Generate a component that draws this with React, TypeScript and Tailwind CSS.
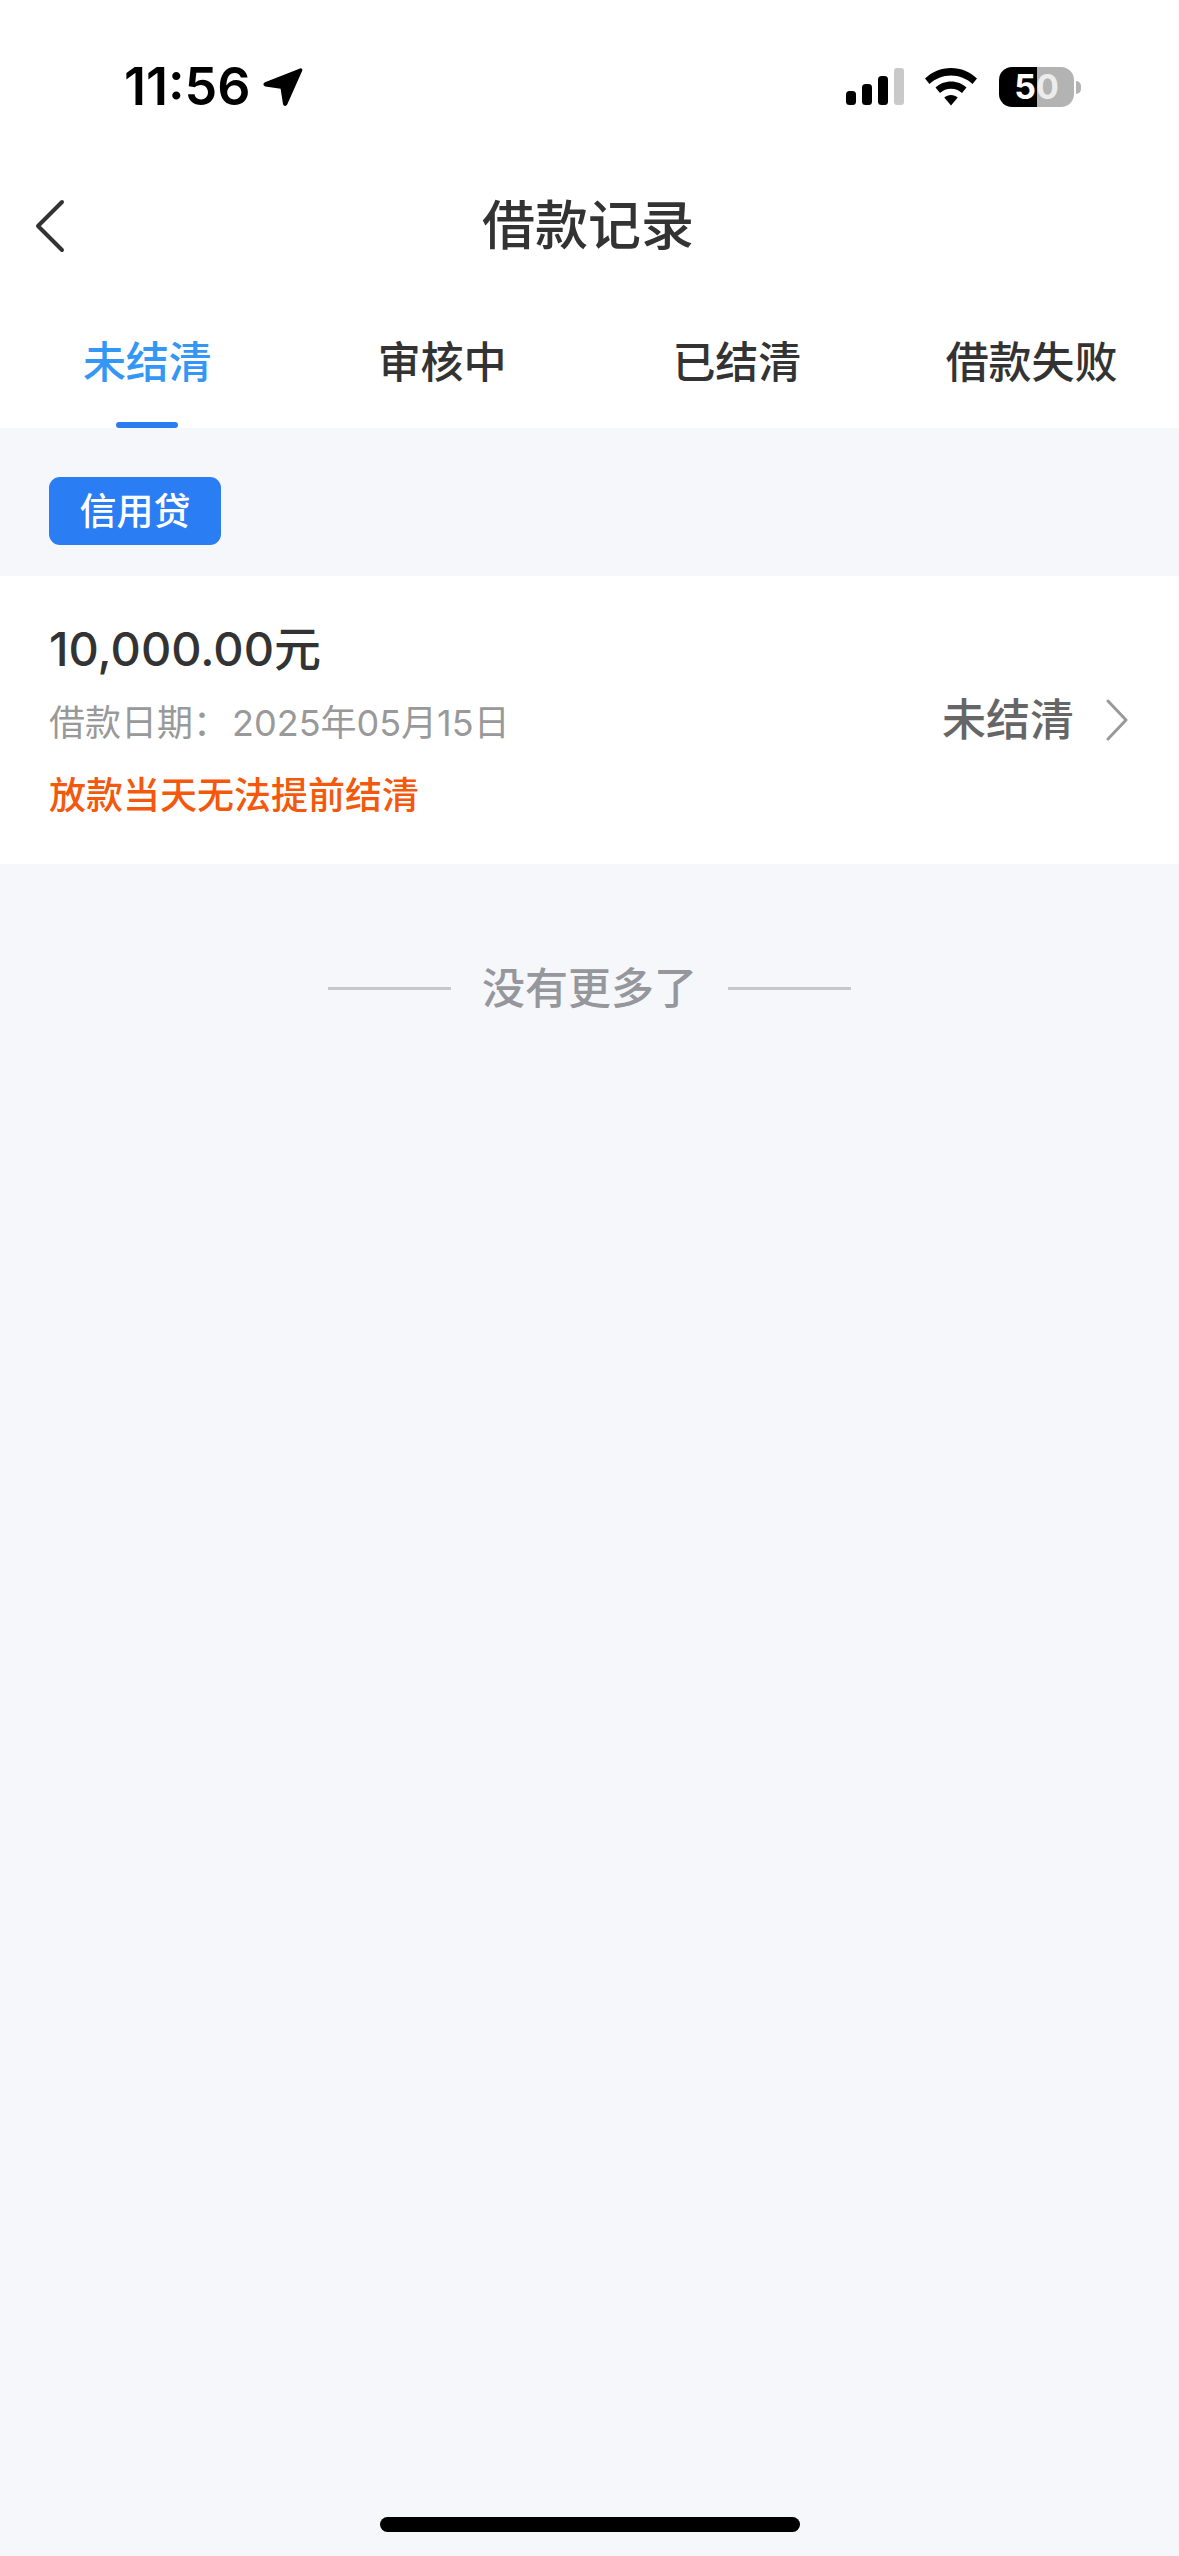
const FONT = "font-['Inter','Noto_Sans_CJK_SC',sans-serif]";

const TABS = [
  { label: '未结清', active: true },
  { label: '审核中', active: false },
  { label: '已结清', active: false },
  { label: '借款失败', active: false },
];

function StatusBar() {
  return (
    <div className="flex h-[107px] items-end justify-between pl-[124px] pr-[98px]">
      <div className="flex items-center gap-[12px]">
        <span className="text-[52px] leading-[40px] font-semibold text-black">11:56</span>
        {/* location arrow */}
        <svg width="40" height="40" viewBox="0 0 40 40">
          <path
            d="M37 1.5C38.5 0.8 39.8 2.2 39.2 3.8L24.2 37.5C23.2 39.6 20.4 39.2 20 37L17.6 21.8L2.4 19.4C0 19 -0.2 16.2 2 15.2Z"
            fill="#000"
          />
        </svg>
      </div>
      <div className="flex items-end">
        {/* signal */}
        <svg width="58" height="38" viewBox="0 0 58 38" className="mb-[1px]">
          <rect x="0" y="23" width="10" height="14" rx="3.5" fill="#000" />
          <rect x="16" y="16" width="10" height="21" rx="3.5" fill="#000" />
          <rect x="32" y="8" width="10" height="29" rx="3.5" fill="#000" />
          <rect x="48" y="0" width="10" height="37" rx="3" fill="#c9c9c9" />
        </svg>
        {/* wifi */}
        <svg width="52" height="38" viewBox="0 0 52 38" className="ml-[21px] mb-[1px]">
          <path d="M26 0C36 0 45 4 52 10.5L47.5 16C41.5 10.5 34 7.5 26 7.5C18 7.5 10.5 10.5 4.5 16L0 10.5C7 4 16 0 26 0Z" fill="#000" />
          <path d="M26 13.5C32 13.5 37.5 15.8 41.5 19.6L37 25C34 22.3 30.2 20.8 26 20.8C21.8 20.8 18 22.3 15 25L10.5 19.6C14.5 15.8 20 13.5 26 13.5Z" fill="#000" />
          <path d="M26 27C28.5 27 31 28 32.7 29.5L26 37.5L19.3 29.5C21 28 23.5 27 26 27Z" fill="#000" />
        </svg>
        <div className="ml-[22px] flex items-center">
          <div className="flex h-[40px] w-[75px] items-center justify-center rounded-[13px] bg-[linear-gradient(90deg,#000_0,#000_38px,#b3b3b3_38px)] text-[34px] leading-none font-bold">
            <span className="text-white">5</span>
            <span className="text-[#ececec]">0</span>
          </div>
          <div className="ml-[2px] h-[13px] w-[5px] rounded-r-full bg-[#b3b3b3]" />
        </div>
      </div>
    </div>
  );
}

function Tabs() {
  return (
    <div className="mt-[87px] flex">
      {TABS.map((tab) => (
        <div key={tab.label} className="flex h-[88px] flex-1 flex-col items-center justify-between">
          <span className={`text-[43px] leading-[44px] font-medium ${tab.active ? 'text-[#3497f5]' : 'text-[#333333]'}`}>
            {tab.label}
          </span>
          {tab.active && <div className="h-[6px] w-[62px] rounded-full bg-[#2b7cf0]" />}
        </div>
      ))}
    </div>
  );
}

export default function App() {
  return (
    <div className={`flex h-[2556px] w-[1179px] flex-col overflow-hidden bg-[#f6f7fb] ${FONT}`}>
      {/* header */}
      <div className="bg-white">
        <StatusBar />
        <div className="mt-[92px] grid grid-cols-[1fr_auto_1fr] items-center pl-[35px]">
          <svg width="30" height="54" viewBox="0 0 30 54" fill="none">
            <path d="M27 3L3 27L27 51" stroke="#333333" strokeWidth="4" strokeLinecap="round" strokeLinejoin="round" />
          </svg>
          <span className="-ml-[38px] text-[53px] leading-[54px] font-medium text-[#333333]">借款记录</span>
          <span />
        </div>
        <Tabs />
      </div>

      {/* loan type badge */}
      <div className="h-[148px] px-[49px] pt-[49px]">
        <span className="flex h-[68px] w-[172px] items-center justify-center rounded-[11px] bg-[#2a7df2] text-[37px] leading-none font-medium text-white">
          信用贷
        </span>
      </div>

      {/* loan row */}
      <div className="flex h-[288px] items-center justify-between bg-white pl-[49px] pr-[51px]">
        <div className="mb-[3px] flex flex-col">
          <span className="text-[47px] leading-[56px] font-medium text-[#333333]">10,000.00元</span>
          <span className="mt-[26px] text-[36px] leading-[40px] text-[#999999]">
            借款日期：<span className="ml-[3px]">2025年05月15日</span>
          </span>
          <span className="mt-[33px] text-[37px] leading-[40px] font-medium text-[#f4580c]">放款当天无法提前结清</span>
        </div>
        <div className="flex items-center gap-[32px]">
          <span className="text-[44px] leading-[44px] font-medium text-[#666666]">未结清</span>
          <svg width="22" height="42" viewBox="0 0 22 42" fill="none">
            <path d="M2 2L20 21L2 40" stroke="#999999" strokeWidth="3" strokeLinecap="round" strokeLinejoin="round" />
          </svg>
        </div>
      </div>

      {/* end of list */}
      <div className="mt-[102px] flex items-center justify-center gap-[31px]">
        <div className="h-[3px] w-[123px] bg-[#c6c7cb]" />
        <span className="text-[43px] leading-[44px] font-medium text-[#96979c]">没有更多了</span>
        <div className="h-[3px] w-[123px] bg-[#c6c7cb]" />
      </div>

      {/* home indicator */}
      <div className="mt-auto mb-[24px] h-[15px] w-[420px] self-center rounded-full bg-black" />
    </div>
  );
}
